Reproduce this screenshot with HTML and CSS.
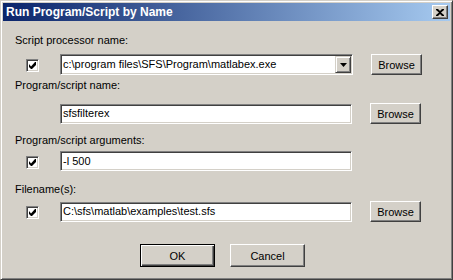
FILE: index.html
```html
<!DOCTYPE html>
<html lang="en">
<head>
    <meta charset="UTF-8">
    <title>Run Program/Script by Name</title>
    <link rel="stylesheet" href="styles.css">
</head>
<body>
    <div class="window">
        <div class="titlebar">
            <span class="title">Run Program/Script by Name</span>
            <button class="close-btn" aria-label="Close">
                <svg width="8" height="7" viewBox="0 0 8 7"><path d="M0 0h2l2 2 2-2h2v1L5 3.5 8 6v1H6L4 5 2 7H0V6l3-2.5L0 1z" fill="#000"/></svg>
            </button>
        </div>

        <div class="content">
            <div class="label first">Script processor name:</div>
            <div class="row row-1">
                <span class="check"><svg width="7" height="7" viewBox="0 0 7 7"><path d="M6 0h1v3L3 7H2L0 5V2l2 2.5z" fill="#000"/></svg></span>
                <div class="combo">
                    <span class="field-text">c:\program files\SFS\Program\matlabex.exe</span>
                    <span class="drop-btn"><svg width="7" height="4" viewBox="0 0 7 4"><path d="M0 0h7L3.5 4z" fill="#000"/></svg></span>
                </div>
                <button class="btn browse">Browse</button>
            </div>

            <div class="label second">Program/script name:</div>
            <div class="row row-2 no-check">
                <div class="field"><span class="field-text">sfsfilterex</span></div>
                <button class="btn browse">Browse</button>
            </div>

            <div class="label third">Program/script arguments:</div>
            <div class="row row-3">
                <span class="check"><svg width="7" height="7" viewBox="0 0 7 7"><path d="M6 0h1v3L3 7H2L0 5V2l2 2.5z" fill="#000"/></svg></span>
                <div class="field"><span class="field-text">-l 500</span></div>
            </div>

            <div class="label fourth">Filename(s):</div>
            <div class="row row-4">
                <span class="check"><svg width="7" height="7" viewBox="0 0 7 7"><path d="M6 0h1v3L3 7H2L0 5V2l2 2.5z" fill="#000"/></svg></span>
                <div class="field"><span class="field-text">C:\sfs\matlab\examples\test.sfs</span></div>
                <button class="btn browse">Browse</button>
            </div>

            <div class="actions">
                <button class="btn action default">OK</button>
                <button class="btn action">Cancel</button>
            </div>
        </div>
    </div>
</body>
</html>
```

FILE: styles.css
```css
body {
    margin: 0;
    font-family: "Liberation Sans", Arial, sans-serif;
    font-size: 11px;
    color: #000;
}
.window {
    width: 453px;
    height: 280px;
    box-sizing: border-box;
    background-color: #d4d0c8;
    border: 1px solid;
    border-color: #d4d0c8 #404040 #404040 #d4d0c8;
    box-shadow: inset 1px 1px #fff, inset -1px -1px #808080;
    padding: 2px;
}
.titlebar {
    height: 18px;
    display: flex;
    align-items: center;
    justify-content: space-between;
    background: linear-gradient(to right, #0a246a, #a6caf0);
    padding: 0 2px 0 2px;
}
.title {
    color: #fff;
    font-weight: bold;
    font-size: 12px;
    padding-left: 1px;
}
.close-btn {
    width: 16px;
    height: 14px;
    padding: 0;
    display: flex;
    align-items: center;
    justify-content: center;
    background-color: #d4d0c8;
    border: 1px solid;
    border-color: #fff #404040 #404040 #fff;
    box-shadow: inset -1px -1px #808080;
}
.content {
    padding: 0 0 0 12px;
}
.label {
    line-height: 13px;
    height: 13px;
}
.label.first { margin-top: 13px; }
.label.second { margin-top: 4px; }
.label.third { margin-top: 10px; }
.label.fourth { margin-top: 12px; }
.row {
    display: flex;
    align-items: center;
    padding-left: 11px;
}
.row-1 { margin-top: 7px; }
.row-2 { margin-top: 11px; }
.row-3 { margin-top: 4px; }
.row-4 { margin-top: 5px; }
.row.no-check {
    padding-left: 45px;
}
.check {
    width: 13px;
    height: 13px;
    box-sizing: border-box;
    background-color: #fff;
    border: 1px solid;
    border-color: #808080 #fff #fff #808080;
    box-shadow: inset 1px 1px #404040, inset -1px -1px #d4d0c8;
    display: flex;
    align-items: center;
    justify-content: center;
    margin-right: 21px;
    margin-top: 2px;
}
.field, .combo {
    width: 292px;
    height: 20px;
    box-sizing: border-box;
    background-color: #fff;
    border: 1px solid;
    border-color: #808080 #fff #fff #808080;
    box-shadow: inset 1px 1px #404040, inset -1px -1px #d4d0c8;
    display: flex;
    align-items: center;
    padding: 0 2px;
}
.combo {
    width: 293px;
    height: 21px;
    justify-content: space-between;
}
.field-text {
    line-height: 13px;
    white-space: nowrap;
}
.drop-btn {
    width: 16px;
    height: 17px;
    box-sizing: border-box;
    background-color: #d4d0c8;
    border: 1px solid;
    border-color: #d4d0c8 #404040 #404040 #d4d0c8;
    box-shadow: inset 1px 1px #fff, inset -1px -1px #808080;
    display: flex;
    align-items: center;
    justify-content: center;
    margin-right: -1px;
}
.btn {
    font-family: "Liberation Sans", Arial, sans-serif;
    font-size: 11px;
    color: #000;
    background-color: #d4d0c8;
    border: 1px solid;
    border-color: #fff #404040 #404040 #fff;
    box-shadow: inset -1px -1px #808080;
    padding: 0;
}
.browse {
    width: 51px;
    height: 21px;
    margin-left: 18px;
}
.actions {
    display: flex;
    justify-content: center;
    gap: 15px;
    margin-top: 22px;
    padding-right: 20px;
}
.action {
    width: 75px;
    height: 23px;
}
.action.default {
    border: 1px solid #000;
    box-shadow: inset 1px 1px #fff, inset -1px -1px #404040, inset -2px -2px #808080;
}
```
